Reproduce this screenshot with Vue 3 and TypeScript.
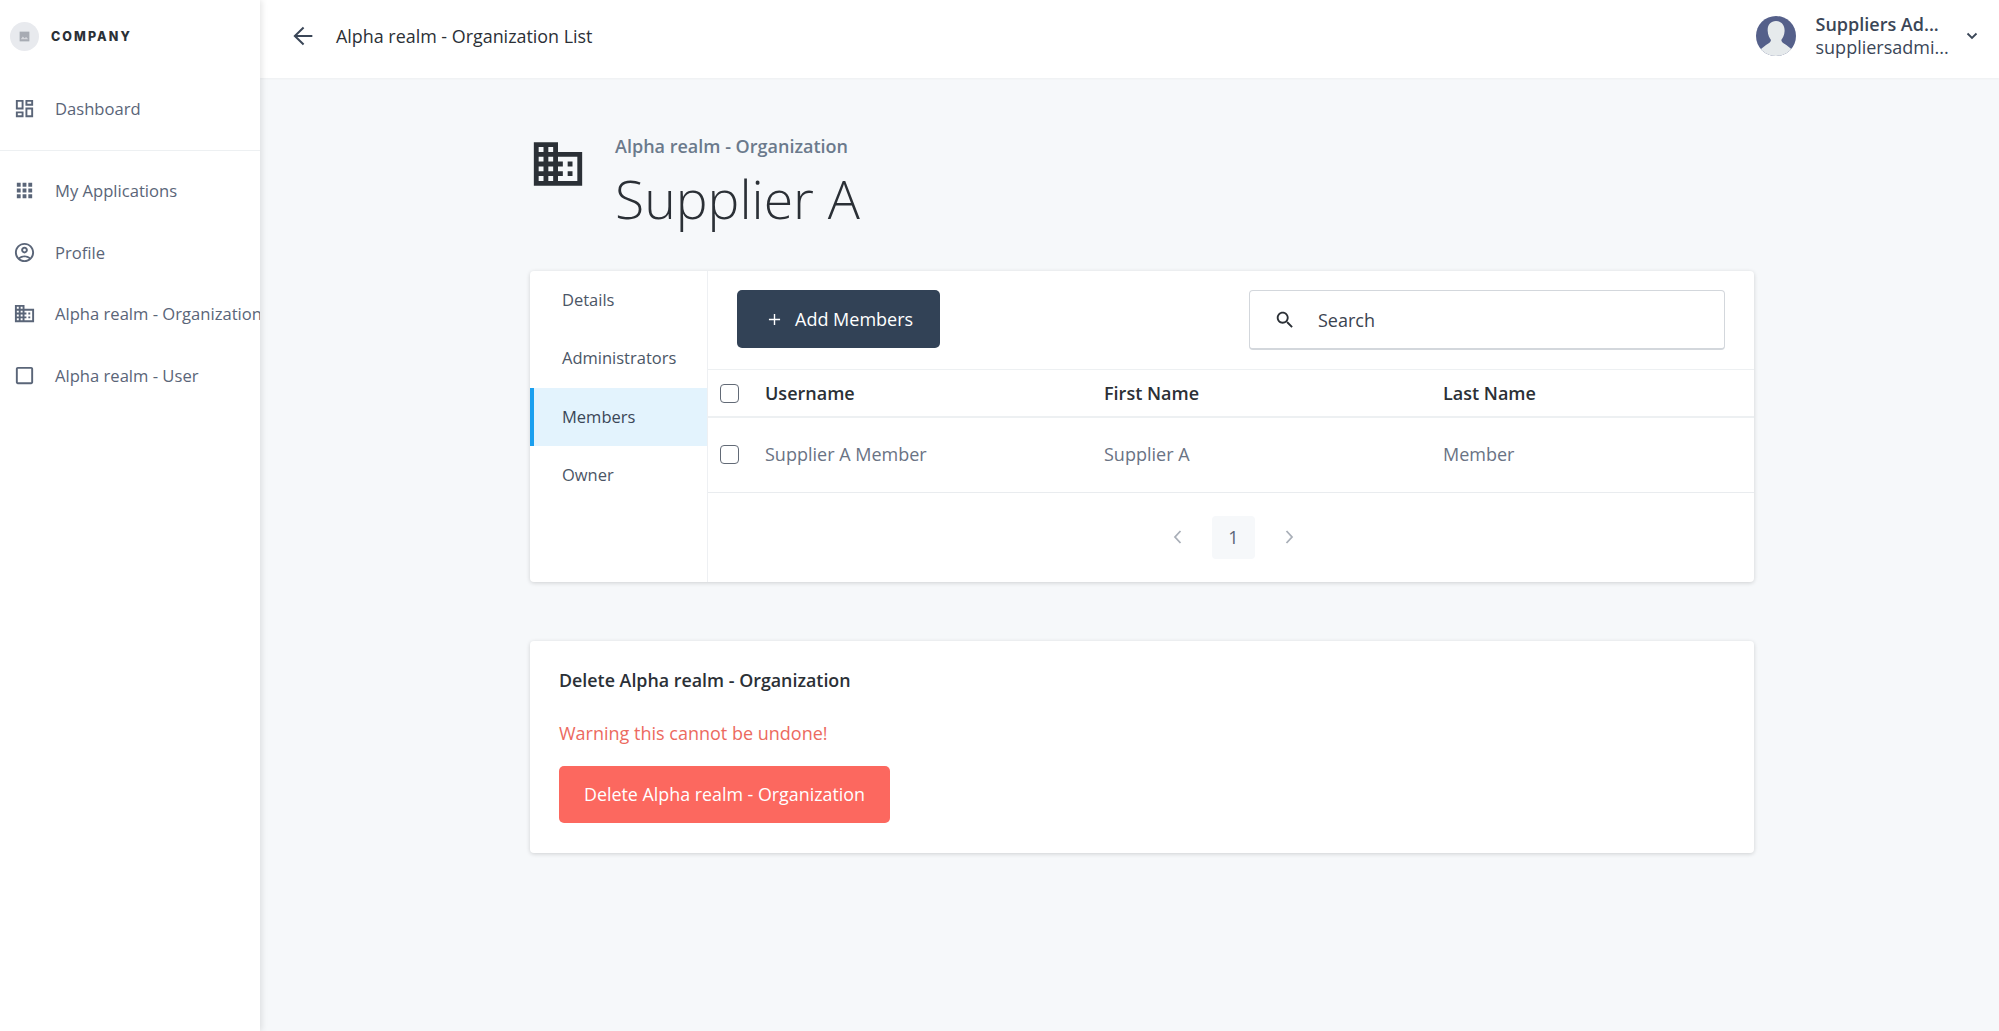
<template>
  <div class="app-shell">
    <aside class="sidebar">
      <div class="brand">
        <span class="brand-logo">
          <svg viewBox="0 0 24 24" width="13" height="13">
            <path d="M3 3h18v18H3z" fill="#a7abb3" />
            <path d="M5 17l4-5 3 3 3-2 4 4z" fill="#d5d7dc" />
          </svg>
        </span>
        <span class="brand-name">COMPANY</span>
      </div>

      <a class="nav-item dashboard-item">
        <svg class="nav-icon" viewBox="0 0 24 24"><path :d="ICONS.dashboard" /></svg>
        <span>Dashboard</span>
      </a>

      <nav class="nav-list">
        <a
          v-for="item in NAV_ITEMS"
          :key="item.label"
          class="nav-item"
        >
          <svg class="nav-icon" viewBox="0 0 24 24"><path :d="ICONS[item.icon]" /></svg>
          <span>{{ item.label }}</span>
        </a>
      </nav>
    </aside>

    <div class="main">
      <header class="topbar">
        <svg class="back-icon" viewBox="0 0 24 24">
          <path d="M20 12H5M12.5 4.7 5 12l7.5 7.3" />
        </svg>
        <span class="topbar-title">Alpha realm - Organization List</span>

        <div class="account">
          <svg class="avatar" viewBox="0 0 40 40">
            <defs>
              <clipPath id="avatar-clip"><circle cx="20" cy="20" r="20" /></clipPath>
            </defs>
            <g clip-path="url(#avatar-clip)">
              <rect width="40" height="40" fill="#55608a" />
              <path d="M20 5c5.5 0 8.8 4.4 8.6 10-.1 4-1.8 7-3.3 9 .3 2 2 3.400 5 5l5 4v9H5v-9l5-4c3-1.600 4.700-3 5-5-1.500-2-3.200-5-3.300-9C11.200 9.400 14.500 5 20 5z" fill="#e6eaec" />
            </g>
          </svg>
          <div class="account-text">
            <span class="account-name">Suppliers Ad...</span>
            <span class="account-email">suppliersadmi...</span>
          </div>
          <svg class="account-chevron" viewBox="0 0 12 8">
            <path d="M1.500 1.500 6 6l4.500-4.500" />
          </svg>
        </div>
      </header>

      <main class="content">
        <section class="page-head">
          <svg class="head-icon" viewBox="0 0 24 24"><path :d="ICONS.domain" /></svg>
          <div>
            <div class="head-subtitle">Alpha realm - Organization</div>
            <h1 class="head-title">Supplier A</h1>
          </div>
        </section>

        <section class="card members-card">
          <ul class="tabs">
            <li
              v-for="tab in TABS"
              :key="tab"
              class="tab"
              :class="{ 'tab-active': tab === activeTab }"
            >
              {{ tab }}
            </li>
          </ul>

          <div class="members-body">
            <div class="toolbar">
              <button class="add-button" type="button">
                <svg class="plus-icon" viewBox="0 0 14 14">
                  <path d="M7 1v12M1 7h12" />
                </svg>
                Add Members
              </button>
              <label class="search">
                <svg class="search-icon" viewBox="0 0 24 24"><path :d="ICONS.search" /></svg>
                <input class="search-input" type="text" placeholder="Search" />
              </label>
            </div>

            <div class="table-row table-head">
              <span class="check"><span class="checkbox" /></span>
              <span v-for="column in COLUMNS" :key="column">{{ column }}</span>
            </div>

            <div
              v-for="member in MEMBERS"
              :key="member.username"
              class="table-row table-item"
            >
              <span class="check"><span class="checkbox" /></span>
              <span>{{ member.username }}</span>
              <span>{{ member.firstName }}</span>
              <span>{{ member.lastName }}</span>
            </div>

            <div class="pagination">
              <svg class="page-arrow" viewBox="0 0 10 16"><path d="M7.500 2 2 8l5.500 6" /></svg>
              <span class="page-number">1</span>
              <svg class="page-arrow" viewBox="0 0 10 16"><path d="M2.500 2 8 8l-5.500 6" /></svg>
            </div>
          </div>
        </section>

        <section class="card danger-card">
          <h2 class="danger-title">Delete Alpha realm - Organization</h2>
          <p class="danger-warning">Warning this cannot be undone!</p>
          <button class="danger-button" type="button">Delete Alpha realm - Organization</button>
        </section>
      </main>
    </div>
  </div>
</template>

<script setup lang="ts">
type IconName = 'dashboard' | 'apps' | 'profile' | 'domain' | 'blank' | 'search';

interface NavItem {
  label: string;
  icon: IconName;
}

interface Member {
  username: string;
  firstName: string;
  lastName: string;
}

// Material icon paths, all on the 24 unit grid
const ICONS: Record<IconName, string> = {
  dashboard: 'M19 5v2h-4V5h4M9 5v6H5V5h4m10 8v6h-4v-6h4M9 17v2H5v-2h4M21 3h-8v6h8V3zM11 3H3v10h8V3zm10 8h-8v10h8V11zm-10 4H3v6h8v-6z',
  apps: 'M4 8h4V4H4v4zm6 12h4v-4h-4v4zm-6 0h4v-4H4v4zm0-6h4v-4H4v4zm6 0h4v-4h-4v4zm6-10v4h4V4h-4zm-6 4h4V4h-4v4zm6 6h4v-4h-4v4zm0 6h4v-4h-4v4z',
  profile: 'M12 2C6.480 2 2 6.480 2 12s4.480 10 10 10 10-4.480 10-10S17.520 2 12 2zM7.350 18.500C8.660 17.560 10.260 17 12 17s3.340.560 4.650 1.500C15.340 19.440 13.740 20 12 20s-3.340-.560-4.650-1.500zm10.790-1.380C16.450 15.800 14.320 15 12 15s-4.450.800-6.140 2.120C4.700 15.730 4 13.950 4 12c0-4.420 3.580-8 8-8s8 3.580 8 8c0 1.950-.700 3.730-1.860 5.120zM12 6c-1.930 0-3.500 1.570-3.500 3.500S10.070 13 12 13s3.500-1.570 3.500-3.500S13.930 6 12 6zm0 5c-.830 0-1.500-.670-1.500-1.500S11.170 8 12 8s1.500.670 1.500 1.500S12.830 11 12 11z',
  domain: 'M12 7V3H2v18h20V7H12zM6 19H4v-2h2v2zm0-4H4v-2h2v2zm0-4H4V9h2v2zm0-4H4V5h2v2zm4 12H8v-2h2v2zm0-4H8v-2h2v2zm0-4H8V9h2v2zm0-4H8V5h2v2zm10 12h-8v-2h2v-2h-2v-2h2v-2h-2V9h8v10zm-2-8h-2v2h2v-2zm0 4h-2v2h2v-2z',
  blank: 'M19 5v14H5V5h14m0-2H5c-1.100 0-2 .900-2 2v14c0 1.100.900 2 2 2h14c1.100 0 2-.900 2-2V5c0-1.100-.900-2-2-2z',
  search: 'M15.500 14h-.790l-.280-.270C15.410 12.590 16 11.110 16 9.500 16 5.910 13.090 3 9.500 3S3 5.910 3 9.500 5.910 16 9.500 16c1.610 0 3.090-.590 4.230-1.570l.270.280v.790l5 4.990L20.490 19l-4.990-5zm-6 0C7.010 14 5 11.990 5 9.500S7.010 5 9.500 5 14 7.010 14 9.500 11.990 14 9.500 14z',
};

const NAV_ITEMS: readonly NavItem[] = [
  { label: 'My Applications', icon: 'apps' },
  { label: 'Profile', icon: 'profile' },
  { label: 'Alpha realm - Organization', icon: 'domain' },
  { label: 'Alpha realm - User', icon: 'blank' },
];

const TABS: readonly string[] = ['Details', 'Administrators', 'Members', 'Owner'];
const activeTab = 'Members';

const COLUMNS: readonly string[] = ['Username', 'First Name', 'Last Name'];

const MEMBERS: readonly Member[] = [
  { username: 'Supplier A Member', firstName: 'Supplier A', lastName: 'Member' },
];
</script>

<style>
html,
body {
  margin: 0;
  background: #f6f8fa;
}
</style>

<style scoped>
.app-shell {
  display: flex;
  min-height: 1031px;
  color: #2b3036;
  font-family: "Open Sans", "Liberation Sans", sans-serif;
  font-size: 18px;
  background: #f6f8fa;
}

.sidebar {
  z-index: 2;
  flex: none;
  width: 260px;
  overflow: hidden;
  white-space: nowrap;
  background: #fff;
  box-shadow: 2px 0 6px rgb(0 0 0 / 10%);
}

.brand {
  display: flex;
  align-items: center;
  gap: 12px;
  height: 72px;
  padding-left: 10px;
}

.brand-logo {
  display: flex;
  align-items: center;
  justify-content: center;
  width: 29px;
  height: 29px;
  background: #e8eaee;
  border-radius: 50%;
}

.brand-name {
  color: #2b3036;
  font-family: Inter, "Liberation Sans", sans-serif;
  font-size: 12.5px;
  font-weight: 800;
  letter-spacing: 0.165em;
}

.nav-item {
  display: flex;
  align-items: center;
  gap: 19px;
  height: 61.5px;
  padding-left: 13px;
  color: #5a6578;
  font-size: 16.6px;
}

.dashboard-item {
  height: 79px;
  padding-bottom: 6px;
  box-sizing: border-box;
  border-bottom: 1px solid #edf0f2;
}

.nav-list {
  padding-top: 9px;
}

.nav-icon {
  flex: none;
  width: 23px;
  height: 23px;
  fill: #5a6578;
}

.main {
  flex: 1;
  min-width: 0;
}

.topbar {
  display: flex;
  align-items: center;
  height: 78px;
  padding: 0 21px 6px 29px;
  box-sizing: border-box;
  background: #fff;
  box-shadow: 0 1px 2px rgb(0 0 0 / 4%);
}

.back-icon {
  width: 28px;
  height: 28px;
  fill: none;
  stroke: #3a4657;
  stroke-width: 1.700;
}

.topbar-title {
  margin-left: 19px;
  font-size: 17.9px;
}

.account {
  display: flex;
  align-items: center;
  margin-left: auto;
}

.avatar {
  width: 40px;
  height: 40px;
}

.account-text {
  display: flex;
  flex-direction: column;
  width: 147.5px;
  margin-left: 20px;
  color: #3a4657;
  line-height: 23.5px;
}

.account-name {
  font-weight: 600;
}

.account-chevron {
  width: 12px;
  height: 8px;
  margin-left: 3px;
  fill: none;
  stroke: #3a4657;
  stroke-width: 1.800;
}

.content {
  width: 1224px;
  margin-left: 270px;
}

.page-head {
  display: flex;
  gap: 28px;
  height: 193px;
  padding-top: 56px;
  box-sizing: border-box;
}

.head-icon {
  flex: none;
  width: 58px;
  height: 58px;
  margin-top: 1px;
  margin-left: -1px;
  fill: #2b3036;
}

.head-subtitle {
  color: #6b7a8c;
  font-size: 18px;
  font-weight: 600;
  line-height: 24px;
}

.head-title {
  margin: 7px 0 0;
  color: #2b3036;
  font-size: 53.5px;
  font-weight: 300;
  line-height: 68px;
}

.card {
  background: #fff;
  border-radius: 4px;
  box-shadow: 0 1px 4px rgb(0 0 0 / 16%);
}

.members-card {
  display: flex;
  height: 311px;
}

.tabs {
  flex: none;
  width: 178px;
  margin: 0;
  padding: 0;
  box-sizing: border-box;
  list-style: none;
  border-right: 1px solid #eef0f3;
}

.tab {
  display: flex;
  align-items: center;
  height: 58.300px;
  padding-bottom: 2px;
  padding-left: 32px;
  box-sizing: border-box;
  color: #4b5666;
  font-size: 16.500px;
}

.tab-active {
  padding-bottom: 0;
  padding-left: 28px;
  color: #3a4657;
  background: #e3f3fd;
  border-left: 4px solid #1a9fef;
}

.members-body {
  flex: 1;
  min-width: 0;
}

.toolbar {
  display: flex;
  justify-content: space-between;
  align-items: flex-start;
  height: 99px;
  padding: 19px 29px 0;
  box-sizing: border-box;
  border-bottom: 1px solid #edf0f2;
}

.add-button {
  display: flex;
  align-items: center;
  gap: 14px;
  height: 58px;
  padding: 0 27px 0 31px;
  color: #fff;
  font: inherit;
  font-size: 18px;
  background: #324256;
  border: none;
  border-radius: 5px;
}

.plus-icon {
  width: 13px;
  height: 13px;
  fill: none;
  stroke: #fff;
  stroke-width: 1.500;
}

.search {
  display: flex;
  align-items: center;
  width: 476px;
  height: 60px;
  box-sizing: border-box;
  padding-left: 24px;
  background: #fff;
  border: 1px solid #d3d7dc;
  border-bottom-width: 2px;
  border-radius: 4px;
}

.search-icon {
  flex: none;
  width: 22px;
  height: 22px;
  fill: #2b3036;
}

.search-input {
  width: 100%;
  margin-left: 22px;
  padding: 0;
  color: #2b3036;
  font: inherit;
  font-size: 18px;
  background: transparent;
  border: none;
  outline: none;
}

.search-input::placeholder {
  color: #3a4350;
  opacity: 1;
}

.table-row {
  display: grid;
  grid-template-columns: 57px 339px 339px 1fr;
  align-items: center;
  box-sizing: border-box;
}

.table-head {
  height: 48px;
  font-weight: 600;
  border-bottom: 2px solid #edf0f2;
}

.table-item {
  height: 75px;
  padding-bottom: 2px;
  color: #6a7384;
  border-bottom: 1px solid #e9ecef;
}

.check {
  display: flex;
  padding-left: 12px;
}

.checkbox {
  width: 19px;
  height: 19px;
  box-sizing: border-box;
  border: 1.500px solid #626a76;
  border-radius: 4px;
}

.pagination {
  display: flex;
  align-items: center;
  justify-content: center;
  gap: 29px;
  height: 89px;
  padding-bottom: 1px;
  padding-left: 5px;
  box-sizing: border-box;
}

.page-arrow {
  width: 10px;
  height: 16px;
  fill: none;
  stroke: #a9afb8;
  stroke-width: 1.800;
}

.page-number {
  display: flex;
  align-items: center;
  justify-content: center;
  width: 43px;
  height: 43px;
  color: #5a6578;
  background: #f6f8fa;
  border-radius: 4px;
}

.danger-card {
  height: 212px;
  margin-top: 59px;
  padding: 26px 29px 0;
  box-sizing: border-box;
}

.danger-title {
  margin: 0;
  font-size: 17.85px;
  font-weight: 600;
  line-height: 26px;
}

.danger-warning {
  margin: 27px 0 0;
  color: #ec6a60;
  font-size: 18px;
  line-height: 26px;
}

.danger-button {
  display: block;
  width: 331px;
  height: 57px;
  margin-top: 20px;
  padding: 0 0 2px;
  color: #fff;
  font: inherit;
  font-size: 17.85px;
  background: #fc685f;
  border: none;
  border-radius: 5px;
}
</style>
